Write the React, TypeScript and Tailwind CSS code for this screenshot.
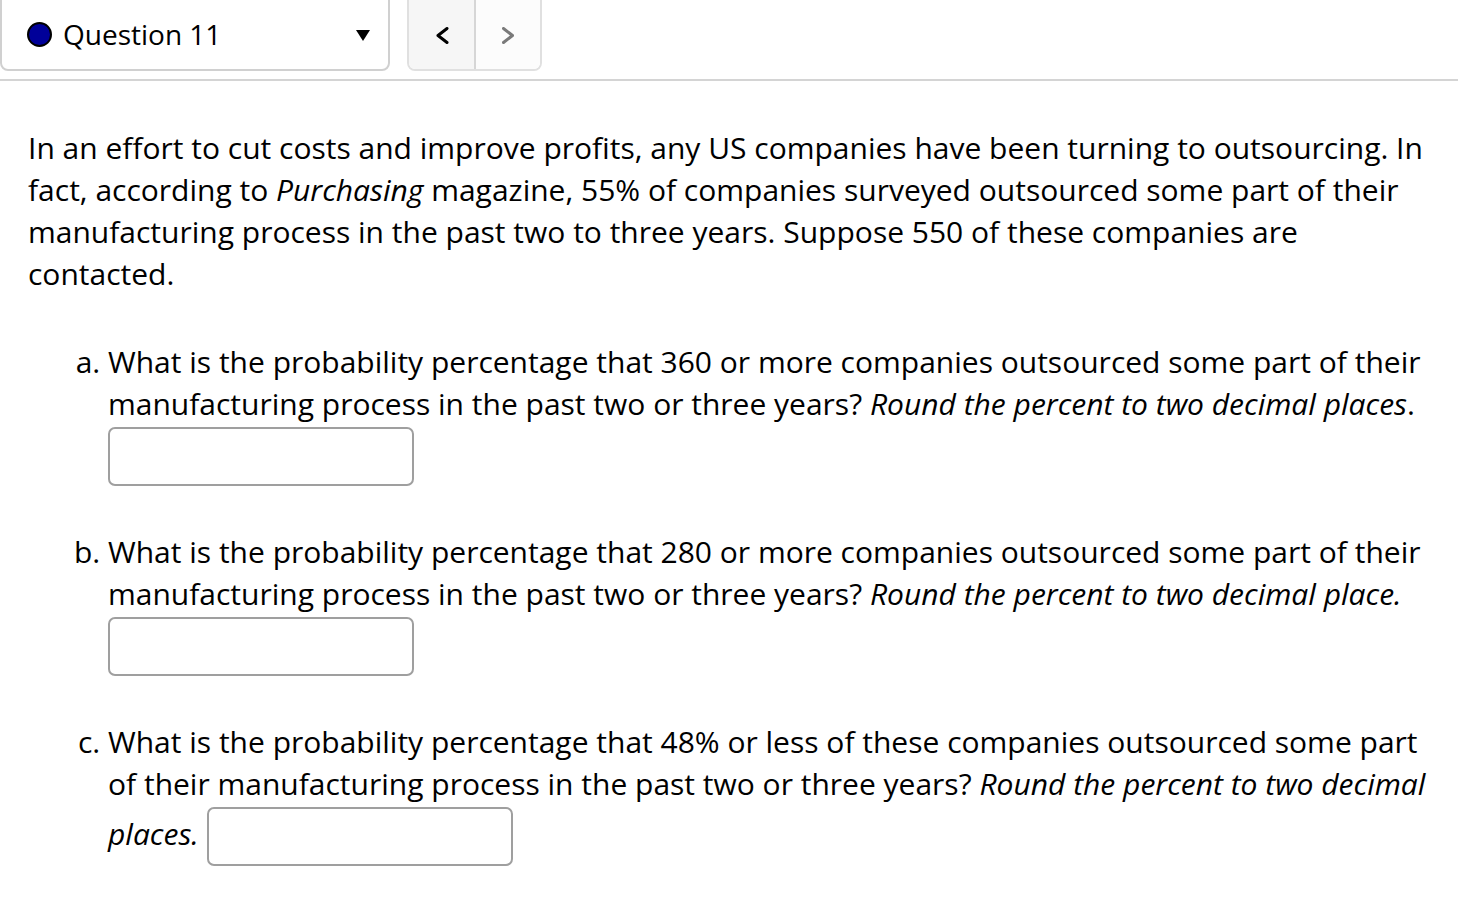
const font = { fontFamily: '"Open Sans", "Liberation Sans", sans-serif' };

function Chevron({ dir, color }: { dir: "left" | "right"; color: string }) {
  const points = dir === "left" ? "11,1.5 2,8.5 11,15.5" : "1.5,1.5 10.5,8.5 1.5,15.5";
  return (
    <svg width="13" height="17" viewBox="0 0 13 17" fill="none">
      <polyline points={points} stroke={color} strokeWidth="3" strokeLinecap="round" strokeLinejoin="round" />
    </svg>
  );
}

function AnswerBox() {
  return (
    <input
      type="text"
      className="inline-block align-middle my-[2px] w-[306px] h-[59px] rounded-[7px] border-2 border-[#9f9f9f] bg-white outline-none"
    />
  );
}

function Header() {
  return (
    <div className="flex items-start">
      <div className="-mt-[10px] flex h-[81px] w-[390px] items-center rounded-[8px] border-2 border-[#d0d0d0] pt-[7px] pl-[25px] pr-[18px]">
        <span className="h-[25px] w-[25px] rounded-full border-2 border-black bg-[#000099]" />
        <span className="ml-[11px] text-[28px] text-black">Question 11</span>
        <span className="ml-auto mt-[2px] h-0 w-0 border-x-[7px] border-t-[11px] border-x-transparent border-t-black" />
      </div>
      <div className="-mt-[10px] ml-[17px] flex h-[81px] w-[135px] overflow-hidden rounded-[8px] border-2 border-[#e0e0e0]">
        <button className="flex flex-1 items-center justify-center bg-[#f6f6f6] pt-[9px] pl-[1px] border-r-2 border-[#d6d6d6]">
          <Chevron dir="left" color="#000000" />
        </button>
        <button className="flex flex-1 items-center justify-center bg-[#fcfcfc] pt-[9px]">
          <Chevron dir="right" color="#7a7a7a" />
        </button>
      </div>
    </div>
  );
}

export default function App() {
  return (
    <div className="min-h-screen bg-white text-black overflow-hidden" style={font}>
      <Header />
      <div className="mt-[8px] h-[2px] w-full bg-[#d4d4d4]" />
      <div className="px-[28px] pt-[46px] text-[30px] leading-[42px]">
        <p className="mb-[46px]">
          In an effort to cut costs and improve profits, any US companies have been turning to outsourcing. In
          fact, according to <i>Purchasing</i> magazine, 55% of companies surveyed outsourced some part of their
          manufacturing process in the past two to three years. Suppose 550 of these companies are contacted.
        </p>
        <ol className="list-[lower-alpha] pl-[80px]">
          <li className="mb-[43px]">
            What is the probability percentage that 360 or more companies outsourced some part of their
            manufacturing process in the past two or three years? <i>Round the percent to two decimal places</i>.{" "}
            <AnswerBox />
          </li>
          <li className="mb-[43px]">
            What is the probability percentage that 280 or more companies outsourced some part of their
            manufacturing process in the past two or three years? <i>Round the percent to two decimal place.</i>{" "}
            <AnswerBox />
          </li>
          <li>
            What is the probability percentage that 48% or less of these companies outsourced some part of their
            manufacturing process in the past two or three years? <i>Round the percent to two decimal places.</i>{" "}
            <AnswerBox />
          </li>
        </ol>
      </div>
    </div>
  );
}
